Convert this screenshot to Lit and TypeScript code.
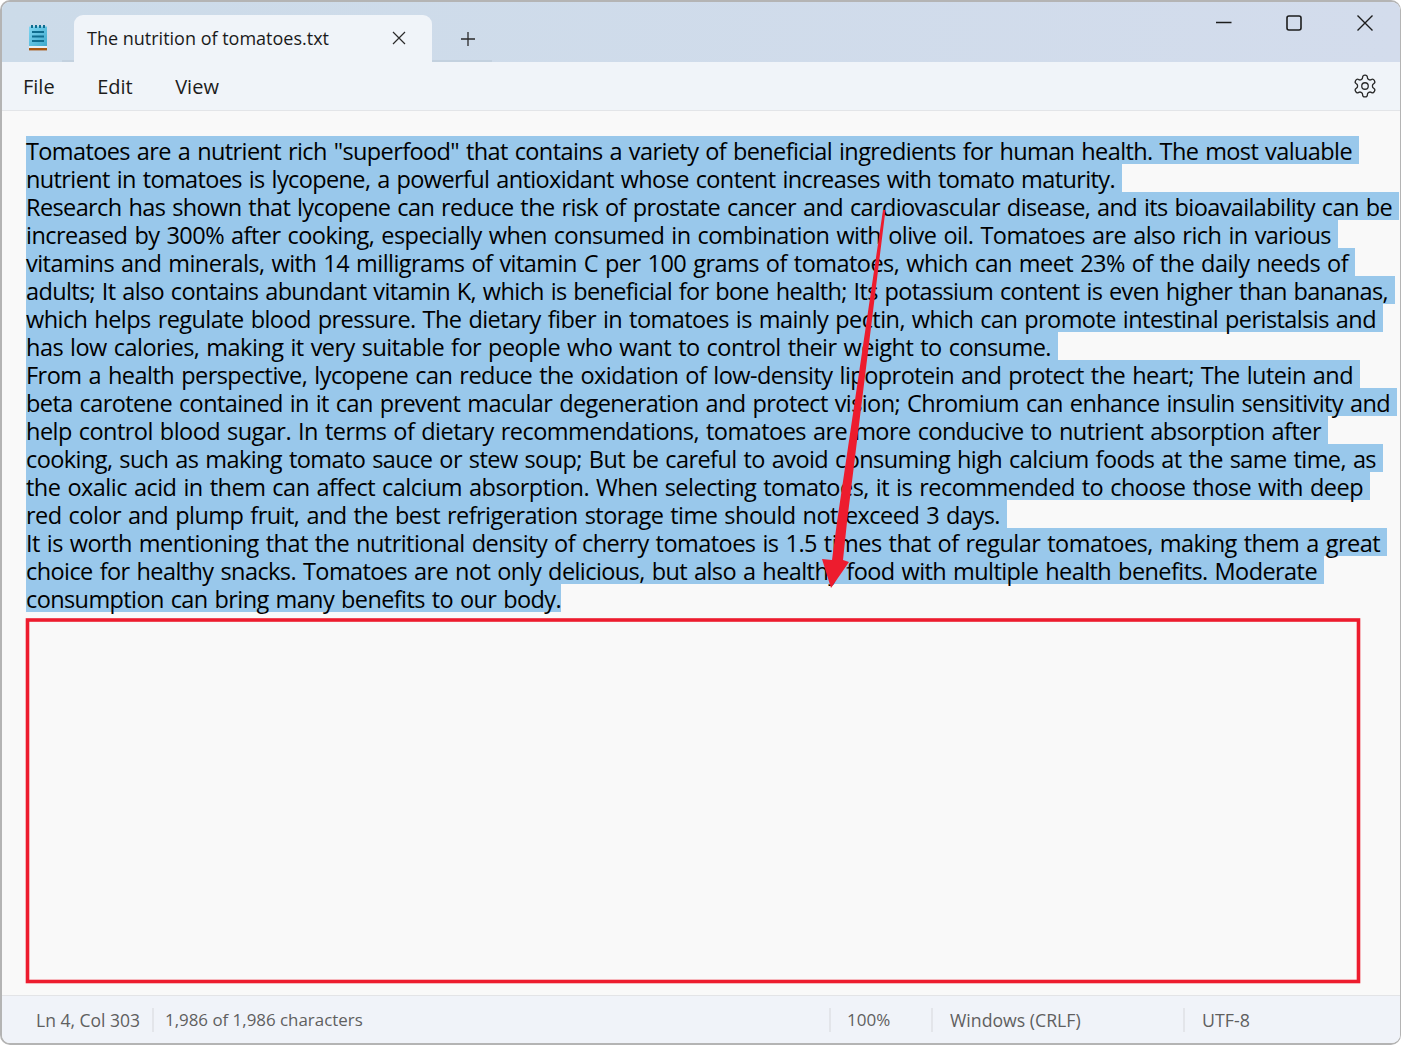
import { LitElement, html, css, svg } from "lit";
import { customElement } from "lit/decorators.js";

const LINES: [string, number][] = [
  ['Tomatoes are a nutrient rich "superfood" that contains a variety of beneficial ingredients for human health. The most valuable', 1352],
  ["nutrient in tomatoes is lycopene, a powerful antioxidant whose content increases with tomato maturity.", 1115],
  ["Research has shown that lycopene can reduce the risk of prostate cancer and cardiovascular disease, and its bioavailability can be", 1392],
  ["increased by 300% after cooking, especially when consumed in combination with olive oil. Tomatoes are also rich in various", 1331],
  ["vitamins and minerals, with 14 milligrams of vitamin C per 100 grams of tomatoes, which can meet 23% of the daily needs of", 1348],
  ["adults; It also contains abundant vitamin K, which is beneficial for bone health; Its potassium content is even higher than bananas,", 1388],
  ["which helps regulate blood pressure. The dietary fiber in tomatoes is mainly pectin, which can promote intestinal peristalsis and", 1376],
  ["has low calories, making it very suitable for people who want to control their weight to consume.", 1051],
  ["From a health perspective, lycopene can reduce the oxidation of low-density lipoprotein and protect the heart; The lutein and", 1353],
  ["beta carotene contained in it can prevent macular degeneration and protect vision; Chromium can enhance insulin sensitivity and", 1390],
  ["help control blood sugar. In terms of dietary recommendations, tomatoes are more conducive to nutrient absorption after", 1321],
  ["cooking, such as making tomato sauce or stew soup; But be careful to avoid consuming high calcium foods at the same time, as", 1376],
  ["the oxalic acid in them can affect calcium absorption. When selecting tomatoes, it is recommended to choose those with deep", 1363],
  ["red color and plump fruit, and the best refrigeration storage time should not exceed 3 days.", 1000],
  ["It is worth mentioning that the nutritional density of cherry tomatoes is 1.5 times that of regular tomatoes, making them a great", 1380],
  ["choice for healthy snacks. Tomatoes are not only delicious, but also a healthy food with multiple health benefits. Moderate", 1317],
  ["consumption can bring many benefits to our body.", 561],
];
const TEXT_LEFT = 26;

@customElement("app-root")
export class AppRoot extends LitElement {
  static styles = css`
    :host {
      display: block;
      width: 1401px;
      height: 1045px;
      background: #fff;
      font-family: "Open Sans", "Noto Sans", sans-serif;
      color: #1b1b1b;
    }
    .window {
      position: relative;
      box-sizing: border-box;
      width: 1401px;
      height: 1045px;
      display: flex;
      flex-direction: column;
      border: 2px solid #b4b4b4;
      border-right-width: 1px;
      border-radius: 10px;
      overflow: hidden;
      background: #f9f9f9;
    }
    .titlebar {
      height: 60px;
      flex: none;
      display: flex;
      background: linear-gradient(90deg, #ccdbe9, #d3dcec);
      position: relative;
    }
    .app-icon {
      width: 72px;
      flex: none;
      display: flex;
      justify-content: flex-start;
      padding: 23px 0 0 26px;
      box-sizing: border-box;
    }
    .tab {
      margin-top: 13px;
      width: 358px;
      height: 47px;
      flex: none;
      box-sizing: border-box;
      background: #f0f4f9;
      border-radius: 9px 9px 0 0;
      display: flex;
      align-items: center;
      padding: 0 26px 2px 13px;
      font-size: 18px;
      font-weight: 500;
      position: relative;
      justify-content: space-between;
      color: #1a1a1a;
    }
    .tab::before,
    .tab::after {
      content: "";
      position: absolute;
      bottom: 0;
      height: 2px;
      background: #c3d1df;
    }
    .tab::before { left: -12px; width: 12px; }
    .tab::after { right: -60px; width: 60px; }
    .plus { margin: 29px 0 0 28px; flex: none; }
    .win-ctrls {
      margin-left: auto;
      display: flex;
      padding: 13px 27px 0 0;
      align-items: flex-start;
    }
    .win-ctrls .min { margin-right: 54px; }
    .win-ctrls .max { margin-right: 55px; }
    .menubar {
      height: 49px;
      flex: none;
      box-sizing: border-box;
      background: #f0f4f9;
      border-bottom: 1px solid #e3e5e8;
      display: flex;
      align-items: center;
      padding: 0 22px 0 21px;
      font-size: 20px;
      gap: 42.5px;
      color: #1c1c1c;
    }
    .gear { margin-left: auto; }
    .content {
      flex: 1;
      box-sizing: border-box;
      padding: 25px 0 0 24px;
      font-size: 23.5px;
      line-height: 28px;
      color: #000;
      overflow: hidden;
    }
    .line { height: 28px; white-space: pre; }
    .sel { display: inline-block; background: #99c8eb; height: 28px; }
    .t { display: inline-block; height: 28px; position: relative; top: 1px; word-spacing: 1.4px; }
    .statusbar {
      height: 48px;
      flex: none;
      box-sizing: border-box;
      border-top: 1px solid #e3e4e7;
      background: #f0f3f9;
      display: flex;
      align-items: center;
      color: #5f5f5f;
    }
    .cell {
      box-sizing: border-box;
      height: 24px;
      line-height: 24px;
      flex: none;
      padding-left: 16px;
      border-left: 2px solid #e3e5ea;
      white-space: nowrap;
    }
    .c1 { border-left: 0; padding-left: 34px; width: 150px; font-size: 17.5px; }
    .c2 { width: 677px; padding-left: 11px; font-size: 16.9px; }
    .c3 { width: 102px; font-size: 17px; }
    .c4 { width: 252px; padding-left: 17px; font-size: 17.7px; }
    .c5 { padding-left: 17px; font-size: 17.8px; }
    .overlay {
      position: absolute;
      left: -2px;
      top: -2px;
      width: 1401px;
      height: 1045px;
      pointer-events: none;
    }
  `;

  firstUpdated() {
    const spans = this.renderRoot.querySelectorAll<HTMLElement>(".t");
    spans.forEach((s, i) => {
      const [text, end] = LINES[i];
      const w = s.getBoundingClientRect().width;
      s.style.letterSpacing = `${(end - TEXT_LEFT - w) / text.length}px`;
    });
  }

  render() {
    return html`
      <div class="window">
        <div class="titlebar">
          <div class="app-icon">
            <svg width="20" height="26" viewBox="0 0 20 26">
              <defs>
                <linearGradient id="nb" x1="0" y1="0" x2="1" y2="1">
                  <stop offset="0" stop-color="#7fd6f2" />
                  <stop offset="1" stop-color="#3fa9cc" />
                </linearGradient>
              </defs>
              <rect x="1" y="1.5" width="18" height="19.5" rx="0.5" fill="url(#nb)" />
              <rect x="3" y="0" width="2" height="3" fill="#0f6d8f" />
              <rect x="7" y="0" width="2" height="3" fill="#0f6d8f" />
              <rect x="11" y="0" width="2" height="3" fill="#0f6d8f" />
              <rect x="15" y="0" width="2" height="3" fill="#0f6d8f" />
              <rect x="4" y="6" width="12" height="2" fill="#0f6d8f" />
              <rect x="4" y="10.5" width="12" height="2" fill="#0f6d8f" />
              <rect x="4" y="15" width="12" height="2" fill="#0f6d8f" />
              <rect x="1" y="21" width="18" height="2" fill="#e9eef2" />
              <rect x="1" y="23" width="18" height="2.4" fill="#a9560f" />
            </svg>
          </div>
          <div class="tab">
            <span>The nutrition of tomatoes.txt</span>
            <svg width="14" height="14" viewBox="0 0 14 14" fill="none" stroke="#2a2a2a" stroke-width="1.2">
              <path d="M1 1 L13 13 M13 1 L1 13" />
            </svg>
          </div>
          <svg class="plus" width="16" height="16" viewBox="0 0 16 16" fill="none" stroke="#2a2a2a" stroke-width="1.3">
            <path d="M8 1 V15 M1 8 H15" />
          </svg>
          <div class="win-ctrls">
            <svg class="min" width="16" height="16" viewBox="0 0 16 16" fill="none" stroke="#1c1c1c" stroke-width="1.3">
              <path d="M0 7.5 H15.5" />
            </svg>
            <svg class="max" width="16" height="16" viewBox="0 0 16 16" fill="none" stroke="#1c1c1c" stroke-width="1.6">
              <rect x="1" y="1" width="14" height="14" rx="2" />
            </svg>
            <svg width="16" height="16" viewBox="0 0 16 16" fill="none" stroke="#1c1c1c" stroke-width="1.4">
              <path d="M0.5 0.5 L15.5 15.5 M15.5 0.5 L0.5 15.5" />
            </svg>
          </div>
        </div>
        <div class="menubar">
          <span>File</span><span>Edit</span><span>View</span>
          <svg class="gear" width="26" height="26" viewBox="0 0 24 24" fill="none" stroke="#2a2a2a" stroke-width="1.2">
            <path d="M12.22 2h-.44a2 2 0 0 0-2 2v.18a2 2 0 0 1-1 1.73l-.43.25a2 2 0 0 1-2 0l-.15-.08a2 2 0 0 0-2.73.73l-.22.38a2 2 0 0 0 .73 2.73l.15.1a2 2 0 0 1 1 1.72v.51a2 2 0 0 1-1 1.74l-.15.09a2 2 0 0 0-.73 2.73l.22.38a2 2 0 0 0 2.73.73l.15-.08a2 2 0 0 1 2 0l.43.25a2 2 0 0 1 1 1.73V20a2 2 0 0 0 2 2h.44a2 2 0 0 0 2-2v-.18a2 2 0 0 1 1-1.73l.43-.25a2 2 0 0 1 2 0l.15.08a2 2 0 0 0 2.73-.73l.22-.39a2 2 0 0 0-.73-2.73l-.15-.08a2 2 0 0 1-1-1.74v-.5a2 2 0 0 1 1-1.74l.15-.09a2 2 0 0 0 .73-2.73l-.22-.38a2 2 0 0 0-2.73-.73l-.15.08a2 2 0 0 1-2 0l-.43-.25a2 2 0 0 1-1-1.73V4a2 2 0 0 0-2-2z" />
            <circle cx="12" cy="12" r="3" />
          </svg>
        </div>
        <div class="content">
          ${LINES.map(
            ([t], i) => html`<div class="line"><span class="sel" style="padding-right:${i === LINES.length - 1 ? 0 : 7}px"><span class="t">${t}</span></span></div>`
          )}
        </div>
        <div class="statusbar">
          <div class="cell c1">Ln 4, Col 303</div>
          <div class="cell c2">1,986 of 1,986 characters</div>
          <div class="cell c3">100%</div>
          <div class="cell c4">Windows (CRLF)</div>
          <div class="cell c5">UTF-8</div>
        </div>
        <svg class="overlay" viewBox="0 0 1401 1045">
          ${svg`<polygon points="883,210 885.5,210 847,522 843,560 849,562 831,588 822,559 832,560 837,522" fill="#ed1c2e" />
          <rect x="27.5" y="620" width="1331" height="361.5" fill="none" stroke="#ed1c2e" stroke-width="3.6" />`}
        </svg>
      </div>
    `;
  }
}
